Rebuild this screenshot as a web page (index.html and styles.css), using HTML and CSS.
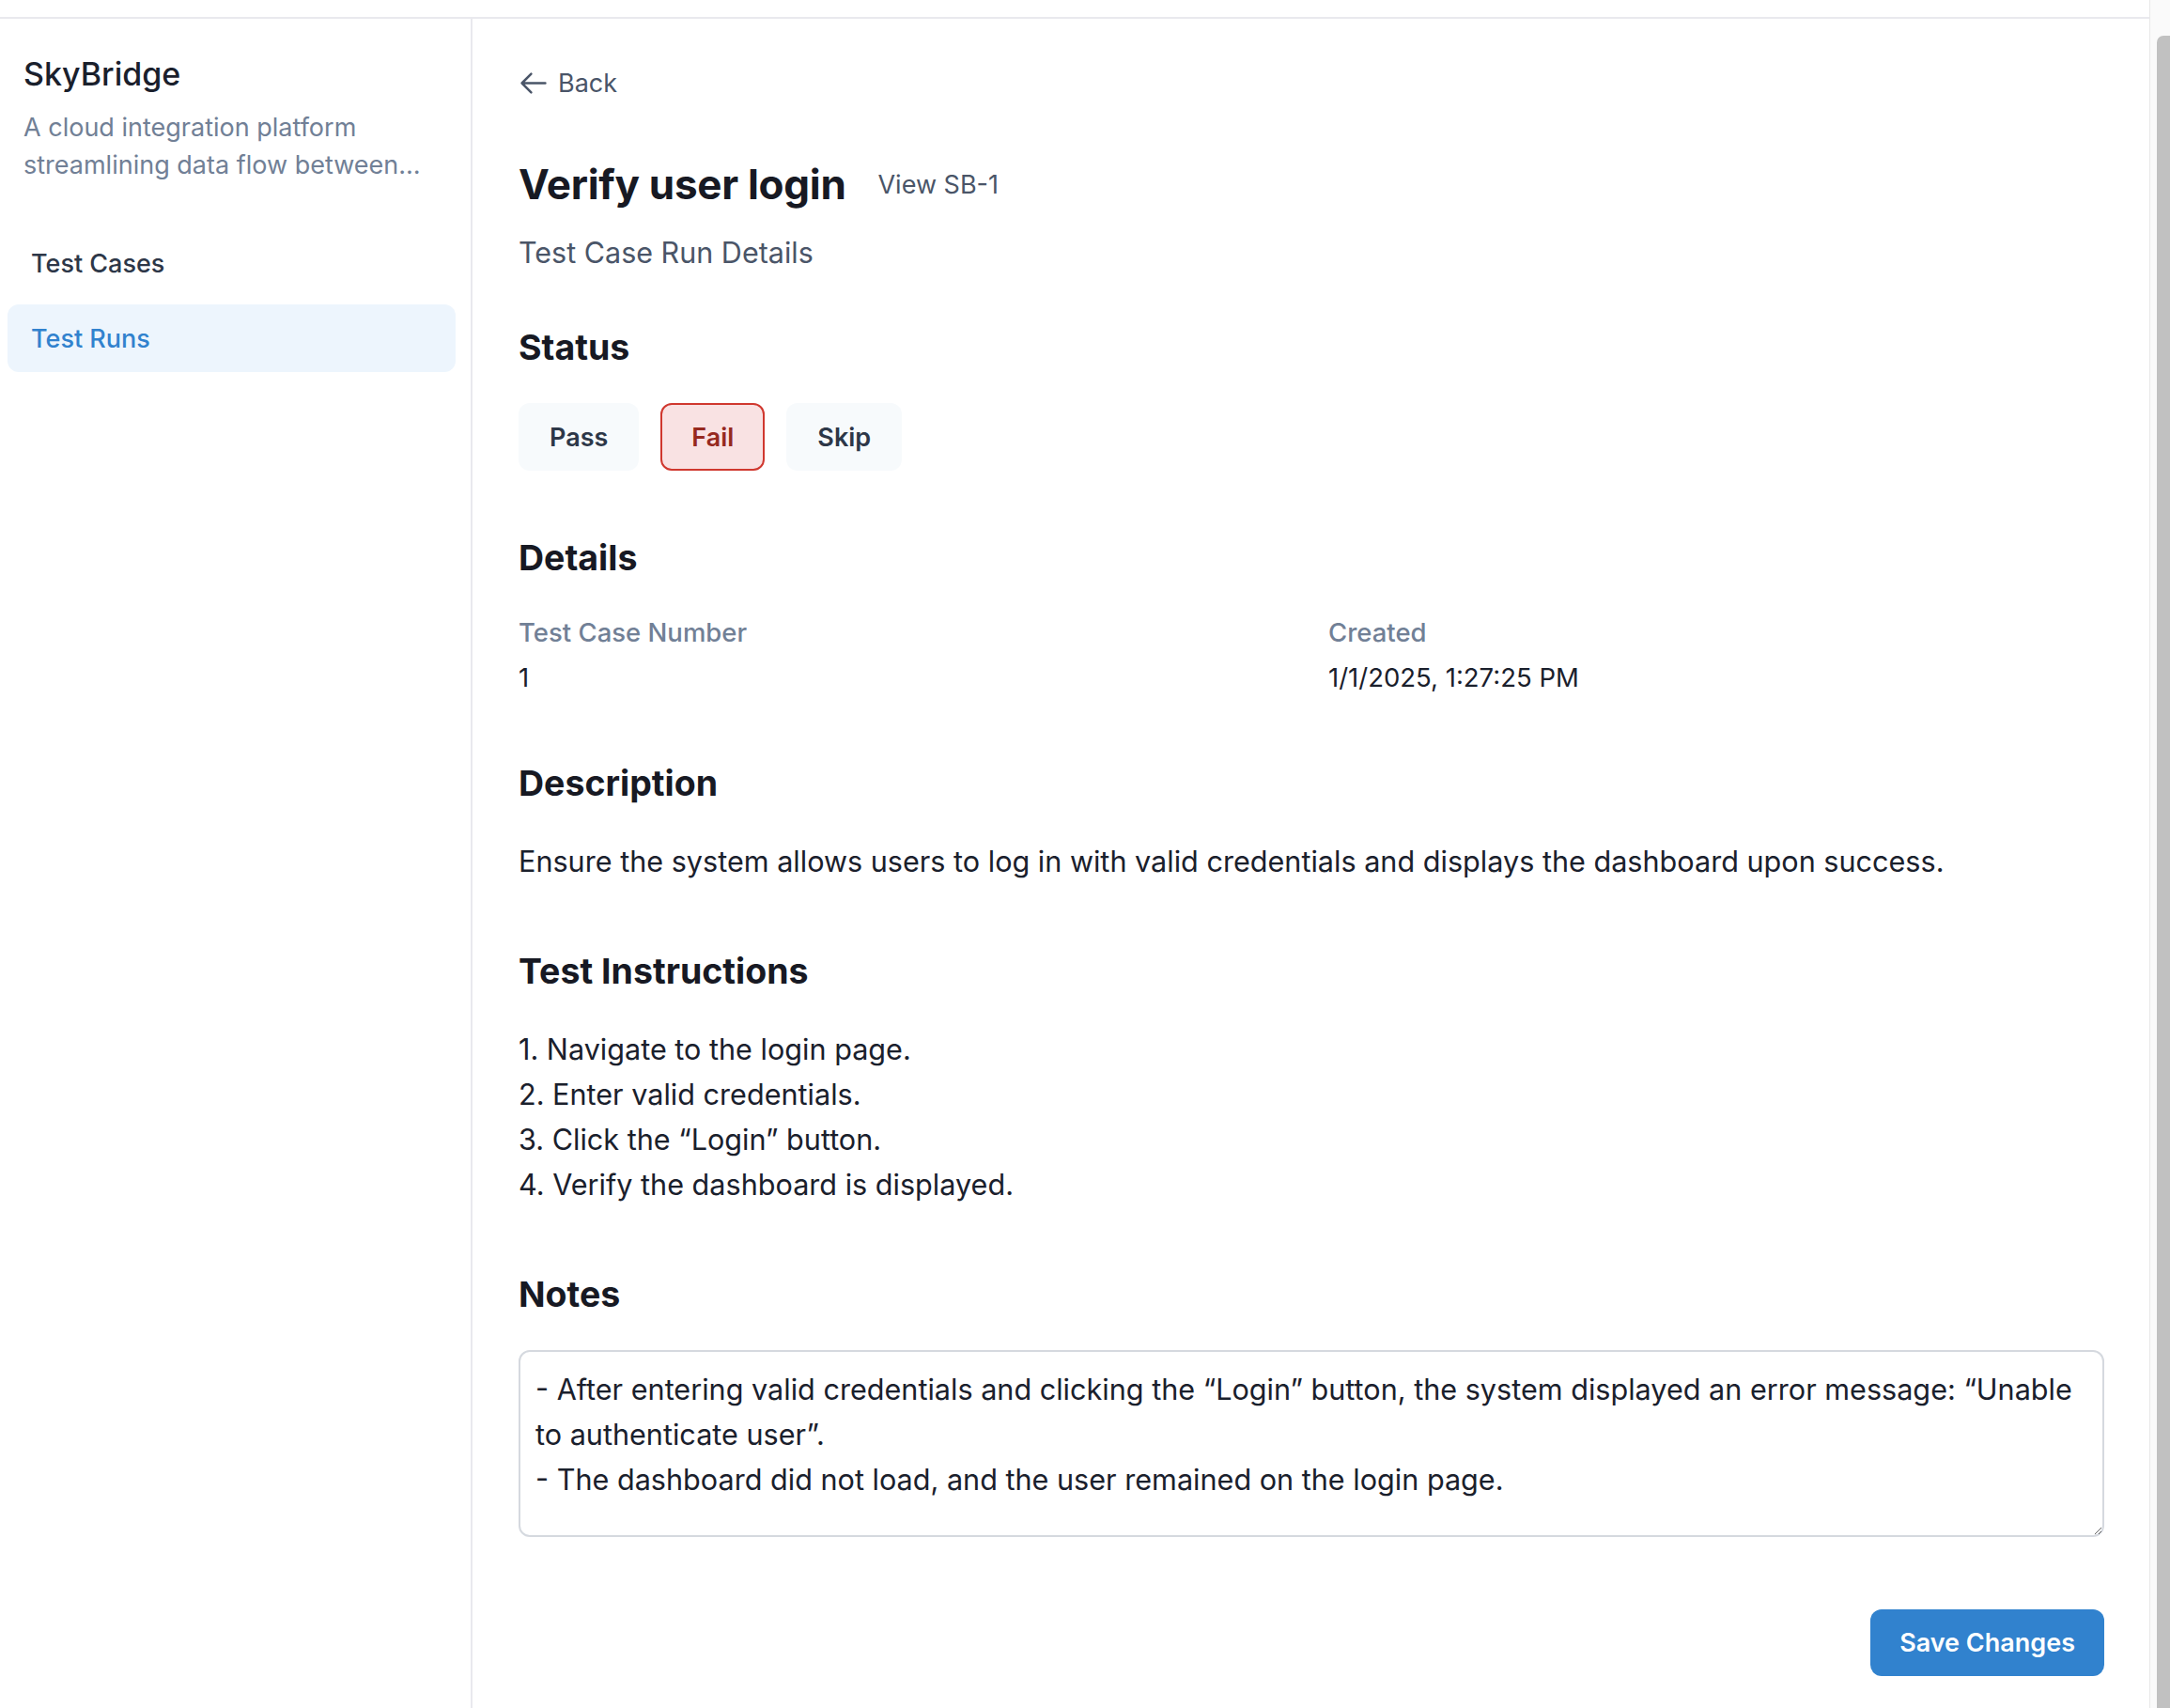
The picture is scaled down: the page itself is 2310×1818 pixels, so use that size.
FILE: index.html
```html
<!DOCTYPE html>
<html lang="en">
<head>
<meta charset="utf-8">
<title>SkyBridge – Test Run</title>
<link rel="stylesheet" href="styles.css">
</head>
<body>
<div class="page">
  <div class="topbar"></div>
  <div class="layout">
    <aside class="sidebar">
      <div class="brand">
        <h1 class="brand-title">SkyBridge</h1>
        <p class="brand-desc">A cloud integration platform streamlining data flow between…</p>
      </div>
      <nav class="nav">
        <a class="nav-item">Test Cases</a>
        <a class="nav-item active">Test Runs</a>
      </nav>
    </aside>
    <main class="main">
      <a class="back">
        <svg class="back-icon" viewBox="0 0 28 24" aria-hidden="true"><path d="M26.5 12H2.5M12 2.5L2.5 12l9.5 9.5"/></svg>
        <span>Back</span>
      </a>
      <div class="title-row">
        <h2 class="title">Verify user login</h2>
        <a class="view-link">View SB-1</a>
      </div>
      <p class="subtitle">Test Case Run Details</p>

      <section class="section">
        <h3 class="section-title">Status</h3>
        <div class="status-group">
          <button class="status-btn">Pass</button>
          <button class="status-btn selected">Fail</button>
          <button class="status-btn">Skip</button>
        </div>
      </section>

      <section class="section">
        <h3 class="section-title">Details</h3>
        <div class="details-grid">
          <div class="field">
            <div class="field-label">Test Case Number</div>
            <div class="field-value">1</div>
          </div>
          <div class="field">
            <div class="field-label">Created</div>
            <div class="field-value">1/1/2025, 1:27:25 PM</div>
          </div>
        </div>
      </section>

      <section class="section">
        <h3 class="section-title">Description</h3>
        <p class="body-text">Ensure the system allows users to log in with valid credentials and displays the dashboard upon success.</p>
      </section>

      <section class="section">
        <h3 class="section-title">Test Instructions</h3>
        <div class="body-text instructions">
          <div>1. Navigate to the login page.</div>
          <div>2. Enter valid credentials.</div>
          <div>3. Click the “Login” button.</div>
          <div>4. Verify the dashboard is displayed.</div>
        </div>
      </section>

      <section class="section notes">
        <h3 class="section-title">Notes</h3>
        <textarea class="notes-input">- After entering valid credentials and clicking the “Login” button, the system displayed an error message: “Unable to authenticate user”.
- The dashboard did not load, and the user remained on the login page.</textarea>
      </section>

      <div class="actions">
        <button class="save-btn">Save Changes</button>
      </div>
    </main>
  </div>
</div>
<div class="scrollbar" aria-hidden="true"><div class="scrollbar-thumb"></div></div>
</body>
</html>
```

FILE: styles.css
```css
html, body {
  margin: 0;
  padding: 0;
}

body {
  display: flex;
  font-family: Inter, "Noto Sans", "Liberation Sans", sans-serif;
  color: #1a202c;
  background: #ffffff;
}

.page {
  flex: 1;
  min-width: 0;
}

.scrollbar {
  flex: none;
  width: 22px;
  box-sizing: border-box;
  display: flex;
  flex-direction: column;
  padding: 38px 0 0 7px;
  background: #fafafa;
  border-left: 1px solid #e8e8e8;
}

.scrollbar-thumb {
  flex: 1;
  background: #c1c1c1;
  border-radius: 7px 0 0 0;
}

.topbar {
  height: 18px;
  border-bottom: 2px solid #e9e9ee;
}

.layout {
  display: flex;
  min-height: 1837px;
}

.sidebar {
  width: 503px;
  flex: none;
  box-sizing: border-box;
  border-right: 2px solid #e9e9ee;
  padding: 37px 16px 0 8px;
}

.brand {
  padding-left: 17px;
}

.brand-title {
  margin: 0;
  font-size: 34px;
  line-height: 44px;
  font-weight: 500;
  color: #1a202c;
}

.brand-desc {
  margin: 15px 0 0;
  font-size: 27px;
  line-height: 40px;
  color: #718096;
}

.nav {
  margin-top: 48px;
  display: flex;
  flex-direction: column;
  gap: 8px;
}

.nav-item {
  display: flex;
  align-items: center;
  height: 72px;
  padding-left: 25px;
  border-radius: 12px;
  font-size: 27px;
  font-weight: 500;
  color: #2d3748;
}

.nav-item.active {
  background: #edf5fd;
  color: #3182ce;
}

.main {
  flex: 1;
  min-width: 0;
  padding: 48px 48px 74px 49px;
}

.back {
  display: inline-flex;
  align-items: center;
  gap: 12px;
  height: 40px;
  font-size: 27px;
  color: #4a5568;
}

.back-icon {
  width: 29px;
  height: 25px;
  margin-left: 1px;
  fill: none;
  stroke: currentColor;
  stroke-width: 2.4;
  stroke-linecap: round;
  stroke-linejoin: round;
}

.title-row {
  display: flex;
  align-items: center;
  gap: 34px;
  margin-top: 61px;
}

.title {
  margin: 0;
  font-size: 44px;
  line-height: 54px;
  font-weight: 700;
  letter-spacing: -0.3px;
  color: #171923;
}

.view-link {
  font-size: 27px;
  color: #4a5568;
}

.subtitle {
  margin: 26px 0 0;
  font-size: 30.5px;
  line-height: 40px;
  color: #4a5568;
}

.section {
  margin-top: 58px;
}

.section + .section {
  margin-top: 70px;
}

.section-title {
  margin: 0 0 37px;
  padding-top: 1px;
  font-size: 37.5px;
  line-height: 44px;
  font-weight: 700;
  color: #171923;
}

.status-group {
  display: flex;
  gap: 23px;
}

.status-btn {
  height: 72px;
  padding: 0 33px;
  border: none;
  border-radius: 12px;
  background: #f7fafc;
  font-family: inherit;
  font-size: 27px;
  font-weight: 600;
  color: #2d3748;
}

.status-btn.selected {
  border: 2px solid #d0382f;
  padding: 0 31px;
  background: #f9e2e3;
  color: #96291f;
}

.details-grid {
  display: grid;
  grid-template-columns: 1fr 1fr;
  column-gap: 36px;
}

.field-label {
  font-size: 27.5px;
  line-height: 40px;
  font-weight: 500;
  color: #718096;
}

.field-value {
  margin-top: 8px;
  font-size: 27.5px;
  line-height: 40px;
  color: #1a202c;
}

.body-text {
  margin: 0;
  font-size: 30.6px;
  line-height: 48px;
  color: #1a202c;
}

.notes-input {
  display: block;
  width: 100%;
  height: 199px;
  box-sizing: border-box;
  padding: 16px;
  border: 2px solid #d5d9df;
  border-radius: 12px;
  font-family: inherit;
  font-size: 30.6px;
  line-height: 48px;
  color: #1a202c;
  resize: vertical;
}

.actions {
  display: flex;
  justify-content: flex-end;
  margin-top: 77px;
}

.save-btn {
  height: 71px;
  padding: 0 31px;
  border: none;
  border-radius: 12px;
  background: #3182ce;
  font-family: inherit;
  font-size: 27px;
  font-weight: 600;
  color: #ffffff;
}
```
